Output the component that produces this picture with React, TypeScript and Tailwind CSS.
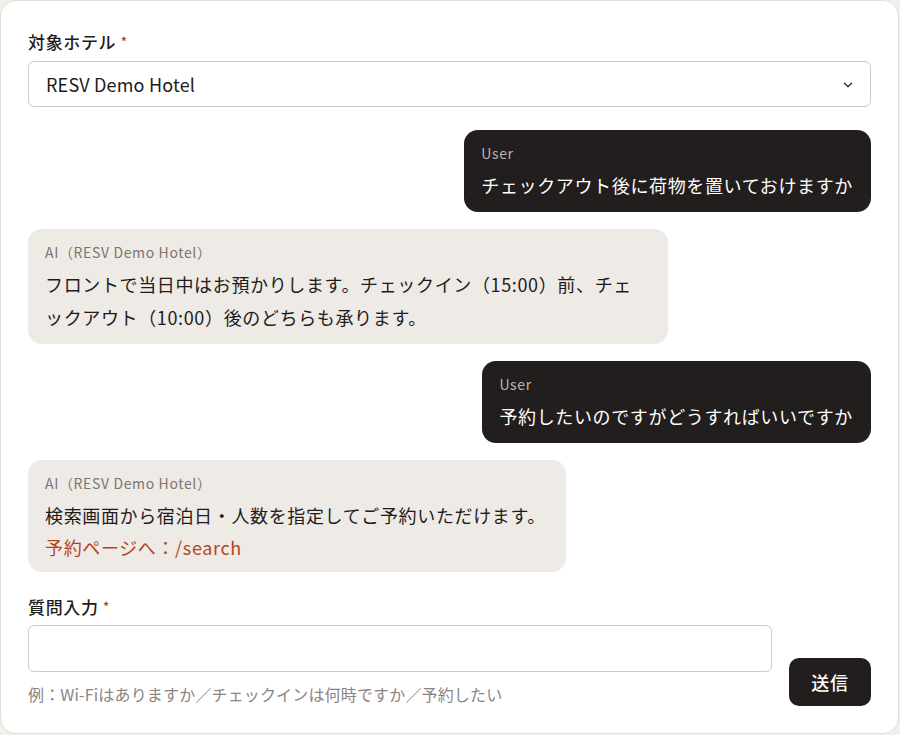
import { ChevronDown } from "lucide-react";

const font = { fontFamily: '"Noto Sans CJK JP", "Noto Sans", sans-serif' };

export default function App() {
  return (
    <div className="bg-[#f3f0eb] min-h-screen tracking-[0.04em]" style={font}>
      <div className="w-[899px] bg-white border border-[#e3ded7] rounded-[16px] px-[27px] pt-[27px] pb-[27px]">
        {/* 対象ホテル */}
        <label className="block text-[17px] font-medium leading-[28px] text-[#1f1b1a] mb-[5px]">
          対象ホテル <span className="text-[#b23a2e] text-[13px] align-top">*</span>
        </label>
        <div className="relative h-[46px] border border-[#cfcac4] rounded-[6px] flex items-center px-[17px]">
          <span className="text-[18px] text-[#1f1b1a] tracking-[0.01em]">RESV Demo Hotel</span>
          <ChevronDown className="absolute right-[15px] top-[16px] w-[14px] h-[14px] text-[#3a3534]" strokeWidth={2.5} />
        </div>

        {/* チャット */}
        <div className="flex flex-col gap-[17px] mt-[23px]">
          <div className="self-end bg-[#221e1d] rounded-[14px] pl-[17px] pr-[18px] pt-[12px] pb-[10px]">
            <p className="text-[14px] leading-[22px] text-[#b9b4af]">User</p>
            <p className="mt-[5px] text-[18px] leading-[33px] text-white">チェックアウト後に荷物を置いておけますか</p>
          </div>

          <div className="self-start w-[640px] bg-[#eeeae5] rounded-[14px] px-[17px] pt-[12px] pb-[10px]">
            <p className="text-[14px] leading-[22px] text-[#7a7571]">AI（RESV Demo Hotel）</p>
            <p className="mt-[5px] text-[18px] leading-[33px] text-[#1f1b1a]">
              フロントで当日中はお預かりします。チェックイン（15:00）前、チェ
              <br />
              ックアウト（10:00）後のどちらも承ります。
            </p>
          </div>

          <div className="self-end bg-[#221e1d] rounded-[14px] pl-[17px] pr-[18px] pt-[12px] pb-[10px]">
            <p className="text-[14px] leading-[22px] text-[#b9b4af]">User</p>
            <p className="mt-[5px] text-[18px] leading-[33px] text-white">予約したいのですがどうすればいいですか</p>
          </div>

          <div className="self-start bg-[#eeeae5] rounded-[14px] pl-[17px] pr-[20px] pt-[12px] pb-[10px]">
            <p className="text-[14px] leading-[22px] text-[#7a7571]">AI（RESV Demo Hotel）</p>
            <p className="mt-[5px] text-[18px] leading-[33px] text-[#1f1b1a]">検索画面から宿泊日・人数を指定してご予約いただけます。</p>
            <p className="text-[18px] leading-[30px] text-[#b4461f]">予約ページへ：/search</p>
          </div>
        </div>

        {/* 質問入力 */}
        <label className="block mt-[21px] text-[17px] font-medium leading-[28px] text-[#1f1b1a] mb-[4px]">
          質問入力 <span className="text-[#b23a2e] text-[13px] align-top">*</span>
        </label>
        <div className="flex items-end gap-[17px]">
          <div className="flex-1">
            <input className="w-full h-[47px] border border-[#cfcac4] rounded-[6px] px-[16px] text-[18px] outline-none" />
            <p className="mt-[10px] text-[16px] leading-[24px] tracking-[0.01em] text-[#8a8580]">例：Wi-Fiはありますか／チェックインは何時ですか／予約したい</p>
          </div>
          <button className="w-[82px] h-[48px] bg-[#221e1d] rounded-[10px] text-white text-[18px] font-medium">送信</button>
        </div>
      </div>
    </div>
  );
}
